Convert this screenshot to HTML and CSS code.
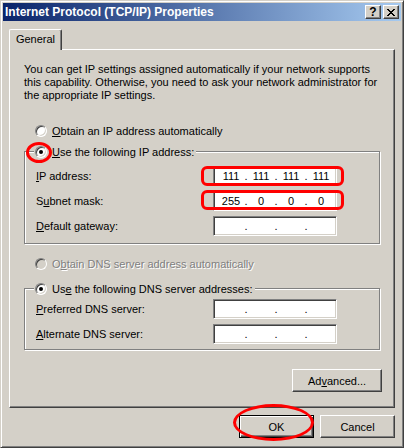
FILE: index.html
```html
<!DOCTYPE html>
<html lang="en">
<head>
  <meta charset="UTF-8" />
  <title>Internet Protocol (TCP/IP) Properties</title>
  <link rel="stylesheet" href="styles.css">
</head>
<body>
  <div class="window">
    <!-- Title bar -->
    <div class="titlebar">
      <span class="title">Internet Protocol (TCP/IP) Properties</span>
      <span class="tbtn help">?</span>
      <span class="tbtn close">
        <svg width="8" height="7" viewBox="0 0 8 7"><path d="M0 0h2v1h1v1h2v-1h1v-1h2v1h-1v1h-1v1h-1v1h1v1h1v1h1v1h-2v-1h-1v-1h-2v1h-1v1h-2v-1h1v-1h1v-1h1v-1h-1v-1h-1v-1h-1z" fill="#000"/></svg>
      </span>
    </div>

    <!-- Tabs -->
    <div class="tabs">
      <div class="tab">General</div>
    </div>

    <div class="panel">
      <p class="intro">You can get IP settings assigned automatically if your network supports<br>this capability. Otherwise, you need to ask your network administrator for<br>the appropriate IP settings.</p>

      <div class="option"><span class="radio"></span><span><u>O</u>btain an IP address automatically</span></div>

      <fieldset class="group group-ip">
        <legend><span class="radio checked"></span><span><u>U</u>se the following IP address:</span></legend>
        <div class="row"><span><u>I</u>P address:</span>
          <div class="ipbox"><span>111</span><i>.</i><span>111</span><i>.</i><span>111</span><i>.</i><span>111</span></div>
        </div>
        <div class="row"><span>S<u>u</u>bnet mask:</span>
          <div class="ipbox"><span>255</span><i>.</i><span>0</span><i>.</i><span>0</span><i>.</i><span>0</span></div>
        </div>
        <div class="row"><span><u>D</u>efault gateway:</span>
          <div class="ipbox"><span></span><i>.</i><span></span><i>.</i><span></span><i>.</i><span></span></div>
        </div>
      </fieldset>

      <div class="option disabled"><span class="radio"></span><span>O<u>b</u>tain DNS server address automatically</span></div>

      <fieldset class="group group-dns">
        <legend><span class="radio checked"></span><span>Us<u>e</u> the following DNS server addresses:</span></legend>
        <div class="row"><span><u>P</u>referred DNS server:</span>
          <div class="ipbox"><span></span><i>.</i><span></span><i>.</i><span></span><i>.</i><span></span></div>
        </div>
        <div class="row"><span><u>A</u>lternate DNS server:</span>
          <div class="ipbox"><span></span><i>.</i><span></span><i>.</i><span></span><i>.</i><span></span></div>
        </div>
      </fieldset>

      <div class="panel-actions">
        <button class="btn advanced">Ad<u>v</u>anced...</button>
      </div>
    </div>

    <div class="actions">
      <button class="btn default">OK</button>
      <button class="btn">Cancel</button>
    </div>

    <!-- red annotation marks -->
    <div class="mark mark-radio"></div>
    <div class="mark mark-box mark-ip"></div>
    <div class="mark mark-box mark-mask"></div>
    <div class="mark mark-ok"></div>
  </div>
</body>
</html>
```

FILE: styles.css
```css
body {
  margin: 0;
  font-family: "Liberation Sans", Arial, sans-serif;
  font-size: 11px;
  color: #000;
  background: #d4d0c8;
}
.window {
  position: relative;
  width: 404px;
  height: 448px;
  box-sizing: border-box;
  border: 1px solid;
  border-color: #d4d0c8 #404040 #404040 #d4d0c8;
  box-shadow: inset 1px 1px #fff, inset -1px -1px #808080;
  padding: 2px;
  background: #d4d0c8;
}
/* Title bar */
.titlebar {
  display: flex;
  align-items: center;
  gap: 2px;
  height: 18px;
  padding: 0 2px;
  background: linear-gradient(to right, #0a246a, #a6caf0);
}
.title {
  flex: 1;
  color: #fff;
  font-weight: bold;
  font-size: 12px;
}
.tbtn {
  display: flex;
  align-items: center;
  justify-content: center;
  width: 16px;
  height: 14px;
  box-sizing: border-box;
  border: 1px solid;
  border-color: #fff #404040 #404040 #fff;
  box-shadow: inset -1px -1px #808080;
  background: #d4d0c8;
  font-weight: bold;
  font-size: 12px;
  line-height: 12px;
}
/* Tabs */
.tabs {
  display: flex;
  margin: 8px 0 0 6px;
}
.tab {
  position: relative;
  z-index: 1;
  width: 53px;
  height: 21px;
  box-sizing: border-box;
  margin-bottom: -1px;
  border: 1px solid;
  border-bottom: 0;
  border-color: #fff #404040 #fff #fff;
  border-radius: 2px 2px 0 0;
  box-shadow: inset -1px 0 #808080;
  background: #d4d0c8;
  text-align: center;
  line-height: 19px;
}
.panel {
  height: 359px;
  margin: 0 6px;
  box-sizing: border-box;
  border: 1px solid;
  border-color: #fff #404040 #404040 #fff;
  box-shadow: inset -1px -1px #808080;
  padding: 13px 12px 0 14px;
}
.intro {
  margin: 0 0 22px;
  line-height: 13px;
  white-space: nowrap;
}
/* Radios */
.option, legend {
  display: flex;
  align-items: center;
  gap: 5px;
  height: 13px;
}
.option {
  margin-left: 11px;
}
.radio {
  position: relative;
  width: 12px;
  height: 12px;
  box-sizing: border-box;
  border-radius: 50%;
  border: 1px solid;
  border-color: #808080 #fff #fff #808080;
  box-shadow: inset 1px 1px #404040, inset -1px -1px #d4d0c8;
  background: #fff;
}
.radio.checked::after {
  content: "";
  position: absolute;
  left: 3px;
  top: 3px;
  width: 4px;
  height: 4px;
  border-radius: 50%;
  background: #000;
}
.disabled {
  color: #808080;
  text-shadow: 1px 1px #fff;
}
.disabled .radio {
  background: #d4d0c8;
}
/* Group boxes */
.group {
  margin: 8px 2px 0 0;
  border: 1px solid #808080;
  box-shadow: 1px 1px #fff, inset 1px 1px #fff;
  padding: 8px 42px 7px 11px;
}
.group legend {
  margin-left: -2px;
  padding: 0 2px 0 1px;
  background: #d4d0c8;
}
.group-dns {
  margin-top: 12px;
  padding-top: 4px;
  padding-bottom: 5px;
}
.option.disabled {
  margin-top: 13px;
}
.row {
  display: flex;
  align-items: center;
  justify-content: space-between;
  height: 20px;
}
.row + .row {
  margin-top: 5px;
}
.ipbox {
  display: flex;
  align-items: center;
  width: 124px;
  height: 20px;
  box-sizing: border-box;
  padding-left: 5px;
  border: 1px solid;
  border-color: #808080 #fff #fff #808080;
  box-shadow: inset 1px 1px #404040, inset -1px -1px #d4d0c8;
  background: #fff;
}
.ipbox span {
  width: 24px;
  text-align: center;
}
.ipbox i {
  width: 6px;
  font-style: normal;
  text-align: center;
}
/* Buttons */
.btn {
  height: 23px;
  box-sizing: border-box;
  padding: 0;
  border: 1px solid;
  border-color: #fff #404040 #404040 #fff;
  box-shadow: inset -1px -1px #808080;
  background: #d4d0c8;
  font-family: inherit;
  font-size: 11px;
  color: #000;
}
.btn.default {
  border-color: #000;
  box-shadow: inset 1px 1px #fff, inset -1px -1px #404040, inset -2px -2px #808080;
}
.panel-actions {
  display: flex;
  justify-content: flex-end;
  margin-top: 19px;
}
.advanced {
  width: 90px;
}
.actions {
  display: flex;
  justify-content: flex-end;
  gap: 6px;
  margin: 7px 6px 0 0;
}
.actions .btn {
  width: 75px;
}
/* Red marks drawn over the screenshot */
.mark {
  position: absolute;
  box-sizing: border-box;
  border: 3px solid #f00;
}
.mark-radio {
  left: 25px;
  top: 141px;
  width: 26px;
  height: 21px;
  border-radius: 50%;
}
.mark-box {
  left: 200px;
  width: 143px;
  height: 20px;
  border-radius: 6px;
}
.mark-ip {
  top: 165px;
}
.mark-mask {
  top: 189px;
}
.mark-ok {
  left: 232px;
  top: 403px;
  width: 81px;
  height: 37px;
  border-radius: 50%;
}
```
